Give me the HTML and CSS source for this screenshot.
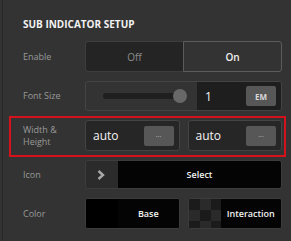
FILE: index.html
```html
<!DOCTYPE html>
<html>
  <head>
    <meta http-equiv="Content-Type" content="text/html; charset=utf-8" />
    <title>Sub Indicator Setup</title>
    <link rel="stylesheet" href="styles.css">
  </head>
  <body>
    <div class="panel">
      <h2 class="panel-title">SUB INDICATOR SETUP</h2>
      <div class="rows">
        <div class="row">
          <span class="row-label">Enable</span>
          <div class="row-control seg">
            <span class="seg-item seg-off">Off</span>
            <span class="seg-item seg-on">On</span>
          </div>
        </div>
        <div class="row row--short">
          <span class="row-label">Font Size</span>
          <div class="row-control size">
            <div class="size-slider">
              <span class="slider-track"></span>
              <span class="slider-thumb"></span>
            </div>
            <div class="size-value">
              <span class="value-text">1</span>
              <span class="btn btn-unit">EM</span>
            </div>
          </div>
        </div>
        <div class="row row--highlight">
          <span class="row-label">Width &amp;<br />Height</span>
          <div class="row-control pair">
            <div class="field">
              <span class="value-text">auto</span>
              <span class="btn btn-more">...</span>
            </div>
            <div class="field">
              <span class="value-text">auto</span>
              <span class="btn btn-more">...</span>
            </div>
          </div>
        </div>
        <div class="row row--icon">
          <span class="row-label">Icon</span>
          <div class="row-control picker">
            <span class="picker-arrow">
              <svg width="8" height="10" viewBox="0 0 8 10">
                <polyline points="1.5,1 6,5 1.5,9" fill="none" stroke="#a8a8a8" stroke-width="2.4" />
              </svg>
            </span>
            <span class="picker-text">Select</span>
          </div>
        </div>
        <div class="row">
          <span class="row-label">Color</span>
          <div class="row-control pair">
            <div class="color">
              <span class="color-swatch"></span>
              <span class="color-text">Base</span>
            </div>
            <div class="color">
              <span class="color-swatch color-swatch--checker"></span>
              <span class="color-text">Interaction</span>
            </div>
          </div>
        </div>
      </div>
    </div>
  </body>
</html>
```

FILE: styles.css
```css
* {
  box-sizing: border-box;
}
html,
body {
  margin: 0;
  padding: 0;
  background: #333;
  height: 100%;
}
body {
  padding-left: 2px;
  font-family: 'Open Sans', 'Noto Sans', sans-serif;
}
.panel {
  height: 100%;
  border-left: 1px solid #272727;
  padding: 17px 9px 0 20px;
}
.panel-title {
  margin: 0 0 9px 0;
  font-size: 10px;
  line-height: 15px;
  font-weight: 700;
  color: #f2f2f2;
}
.rows {
  display: flex;
  flex-direction: column;
  gap: 9px;
}
.row {
  display: flex;
  align-items: center;
  height: 31px;
}
.row--short {
  height: 30px;
}
.row--icon {
  height: 29px;
}
.row--highlight {
  height: 41px;
  margin: -4px -4px -6px -14px;
  padding: 2px 2px 4px 12px;
  border: 2px solid #d5121b;
}
.row-label {
  width: 62px;
  flex: none;
  font-size: 9px;
  line-height: 12px;
  color: #9a9a9a;
}
.row-control {
  flex: 1;
  height: 100%;
  display: flex;
}

/* on / off */
.seg-item {
  flex: 1;
  display: flex;
  align-items: center;
  justify-content: center;
  font-size: 10px;
}
.seg-off {
  background: #242424;
  border: 1px solid #3d3d3d;
  border-right: none;
  border-radius: 3px 0 0 3px;
  color: #8c8c8c;
}
.seg-on {
  background: #333;
  border: 1px solid #5c5c5c;
  border-radius: 0 3px 3px 0;
  color: #f0f0f0;
  font-weight: 600;
}

/* font size */
.size {
  border: 1px solid #444;
  border-radius: 3px;
  overflow: hidden;
}
.size-slider {
  width: 111px;
  flex: none;
  position: relative;
  display: flex;
  align-items: center;
  padding-left: 17px;
}
.slider-track {
  width: 83px;
  height: 6px;
  border-radius: 3px;
  background: #1f1f1f;
}
.slider-thumb {
  position: absolute;
  left: 87px;
  top: 7px;
  width: 14px;
  height: 14px;
  border-radius: 50%;
  background: #686868;
}
.size-value {
  flex: 1;
  background: #1e1e1e;
  display: flex;
  align-items: center;
  justify-content: space-between;
  padding: 0 5px 0 8px;
}
.value-text {
  font-size: 12px;
  color: #f4f4f4;
}
.btn {
  width: 30px;
  height: 20px;
  border-radius: 2px;
  background: #575757;
  display: flex;
  align-items: center;
  justify-content: center;
  color: #d8d8d8;
}
.btn-unit {
  font-size: 8px;
  font-weight: 700;
}
.btn-more {
  font-size: 7px;
  line-height: 7px;
  padding-bottom: 3px;
  color: #bdbdbd;
}

/* width & height */
.pair {
  gap: 8px;
}
.field {
  flex: 1;
  display: flex;
  align-items: center;
  justify-content: space-between;
  padding: 0 5px 0 7px;
  background: #262626;
  border: 1px solid #444;
  border-radius: 3px;
}

/* icon */
.picker {
  border: 1px solid #3c3c3c;
  border-radius: 3px;
  overflow: hidden;
}
.picker-arrow {
  width: 32px;
  flex: none;
  background: #2b2b2b;
  display: flex;
  align-items: center;
  padding-left: 11px;
}
.picker-arrow svg {
  display: block;
}
.picker-text,
.color-text {
  flex: 1;
  background: #040404;
  display: flex;
  align-items: center;
  justify-content: center;
  font-size: 9px;
  font-weight: 600;
  color: #f2f2f2;
}

/* color */
.color {
  flex: 1;
  display: flex;
  border: 1px solid #3c3c3c;
  border-radius: 3px;
  overflow: hidden;
  background: #000;
}
.color-swatch {
  width: 32px;
  flex: none;
  background: #000;
}
.color-swatch--checker {
  background: repeating-conic-gradient(#2a2a2a 0 25%, #1b1b1b 0 50%) 0 0 / 22px 22px;
}
```
